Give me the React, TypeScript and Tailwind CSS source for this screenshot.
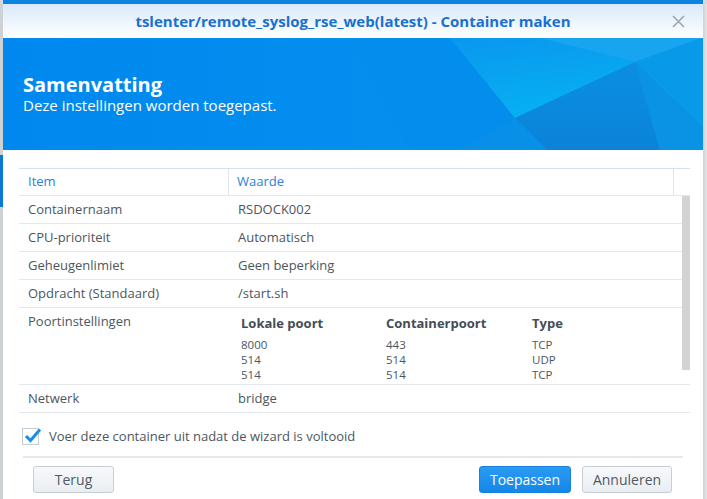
import React from "react";

const FONT = '"Open Sans", "Noto Sans", "Liberation Sans", sans-serif';

function Banner() {
  return (
    <div className="relative h-[112px] bg-[#0089ee] overflow-hidden">
      <svg className="absolute inset-0" width="700" height="112" viewBox="0 0 700 112">
        <defs>
          <linearGradient id="base" x1="0" y1="0" x2="1" y2="0">
            <stop offset="0" stopColor="#0088ee" />
            <stop offset="1" stopColor="#0794ee" />
          </linearGradient>
          <linearGradient id="lit" x1="0" y1="0" x2="0.3" y2="1">
            <stop offset="0" stopColor="#0a97ef" />
            <stop offset="1" stopColor="#06b0f2" />
          </linearGradient>
          <linearGradient id="dark" x1="0" y1="0" x2="0" y2="1">
            <stop offset="0" stopColor="#0a8fe2" />
            <stop offset="1" stopColor="#0a83d9" />
          </linearGradient>
        </defs>
        <rect x="0" y="0" width="700" height="112" fill="url(#base)" />
        <polygon points="349,0 447,0 512,80 457,112 407,112" fill="#038eee" />
        <polygon points="447,0 537,0 632,24 512,80" fill="url(#lit)" />
        <polygon points="537,0 699,0 632,24" fill="#18a5ef" />
        <polygon points="699,0 700,0 700,90 632,24" fill="#0999e9" />
        <polygon points="512,80 632,24 657,112 544,112" fill="url(#dark)" />
        <polygon points="632,24 700,90 700,112 657,112" fill="#0a92e4" />
        <polygon points="512,80 544,112 457,112" fill="#0890e8" />
      </svg>
      <div className="relative pl-[20px] pt-[36px] text-white">
        <div className="text-[20px] font-bold leading-[22px]">Samenvatting</div>
        <div className="text-[15px] leading-[19px]">Deze instellingen worden toegepast.</div>
      </div>
    </div>
  );
}

function Row({ label, value }: { label: string; value: string }) {
  return (
    <div className="flex h-[28px] border-b border-[#e6e9ec] items-center">
      <div className="w-[210px] pl-[9px]">{label}</div>
      <div className="pl-[9px]">{value}</div>
    </div>
  );
}

function Check() {
  return (
    <div className="relative w-[17px] h-[17px] border border-[#c4ccd4] bg-white">
      <svg className="absolute left-[1px] top-[-2px]" width="18" height="17" viewBox="0 0 18 17">
        <path d="M2 9 L6.5 13.5 L16 2.5" fill="none" stroke="#1a8de8" strokeWidth="3" strokeLinecap="butt" strokeLinejoin="miter" />
      </svg>
    </div>
  );
}

export default function App() {
  const ports = [
    ["8000", "443", "TCP"],
    ["514", "514", "UDP"],
    ["514", "514", "TCP"],
  ];
  return (
    <div className="w-[707px] h-[499px] bg-[#d6d9dc] flex flex-col overflow-hidden" style={{ fontFamily: FONT }}>
      <div className="h-[4px] bg-[#0a84e0] ml-[3px] mr-[4px] shrink-0" />
      <div className="flex flex-1 min-h-0">
        <div className="w-[3px] flex flex-col bg-[#cfd2d5]">
          <div className="h-[151px]" />
          <div className="h-[52px] bg-[#0a7bd6]" />
        </div>
        <div className="w-[700px] bg-white flex flex-col">
          <div className="relative h-[34px] bg-gradient-to-b from-[#d9e9fb] to-[#ffffff] flex items-center justify-center">
            <div className="text-[15px] font-bold text-[#1a70cf] leading-[20px] mt-[-1px]">
              tslenter/remote_syslog_rse_web(latest) - Container maken
            </div>
            <svg className="absolute right-[18px] top-[11px]" width="13" height="13" viewBox="0 0 13 13">
              <path d="M1 1 L12 12 M12 1 L1 12" stroke="#9ba6b1" strokeWidth="1.6" />
            </svg>
          </div>
          <Banner />
          <div className="flex-1 flex flex-col text-[13px] text-[#4c5661]">
            <div className="relative ml-[16px] mt-[18px] w-[671px]">
              <div className="flex h-[28px] border-t border-b border-t-[#d5e2ee] border-b-[#e4e8ec] items-center text-[#2a7fd9]">
                <div className="w-[210px] h-full flex items-center pl-[9px] border-r border-[#dde6ef]">Item</div>
                <div className="flex-1 h-full flex items-center pl-[8px] border-r border-[#dde6ef]">Waarde</div>
                <div className="w-[16px]" />
              </div>
              <Row label="Containernaam" value="RSDOCK002" />
              <Row label="CPU-prioriteit" value="Automatisch" />
              <Row label="Geheugenlimiet" value="Geen beperking" />
              <Row label="Opdracht (Standaard)" value="/start.sh" />
              <div className="flex h-[77px] border-b border-[#e6e9ec]">
                <div className="w-[210px] pl-[9px] pt-[4px] leading-[18px]">Poortinstellingen</div>
                <div className="pl-[12px] pt-[6px]">
                  <div className="flex font-bold text-[#434d57] leading-[18px]">
                    <div className="w-[145px]">Lokale poort</div>
                    <div className="w-[146px]">Containerpoort</div>
                    <div>Type</div>
                  </div>
                  <div className="mt-[5px] text-[11.5px] leading-[15px]">
                    {ports.map((p, i) => (
                      <div key={i} className="flex">
                        <div className="w-[145px]">{p[0]}</div>
                        <div className="w-[146px]">{p[1]}</div>
                        <div>{p[2]}</div>
                      </div>
                    ))}
                  </div>
                </div>
              </div>
              <Row label="Netwerk" value="bridge" />
              <div className="absolute left-[663px] top-[28px] w-[8px] h-[174px] bg-[#d3d3d3]" />
            </div>
            <div className="flex items-center ml-[19px] mt-[14px] gap-[10px]">
              <Check />
              <div className="leading-[18px]">Voer deze container uit nadat de wizard is voltooid</div>
            </div>
            <div className="ml-[20px] mt-[11px] w-[660px] h-[2px] bg-[#e6e8ea]" />
            <div className="flex mt-[8px] px-[30px] pr-[31px] items-center">
              <button className="w-[81px] h-[27px] rounded-[3px] border border-[#c7ced6] bg-gradient-to-b from-[#f7f9fb] to-[#e9eef3] text-[14px] text-[#505a64]">
                Terug
              </button>
              <div className="flex-1" />
              <button className="w-[92px] h-[27px] rounded-[3px] border border-[#1a80dc] bg-gradient-to-b from-[#2a9bf2] to-[#1288ea] text-[14px] text-white">
                Toepassen
              </button>
              <button className="ml-[11px] w-[90px] h-[27px] rounded-[3px] border border-[#c7ced6] bg-gradient-to-b from-[#f7f9fb] to-[#e9eef3] text-[14px] text-[#505a64]">
                Annuleren
              </button>
            </div>
          </div>
        </div>
        <div className="flex-1 bg-gradient-to-r from-[#cfd2d5] to-[#e4e6e8]" />
      </div>
    </div>
  );
}
